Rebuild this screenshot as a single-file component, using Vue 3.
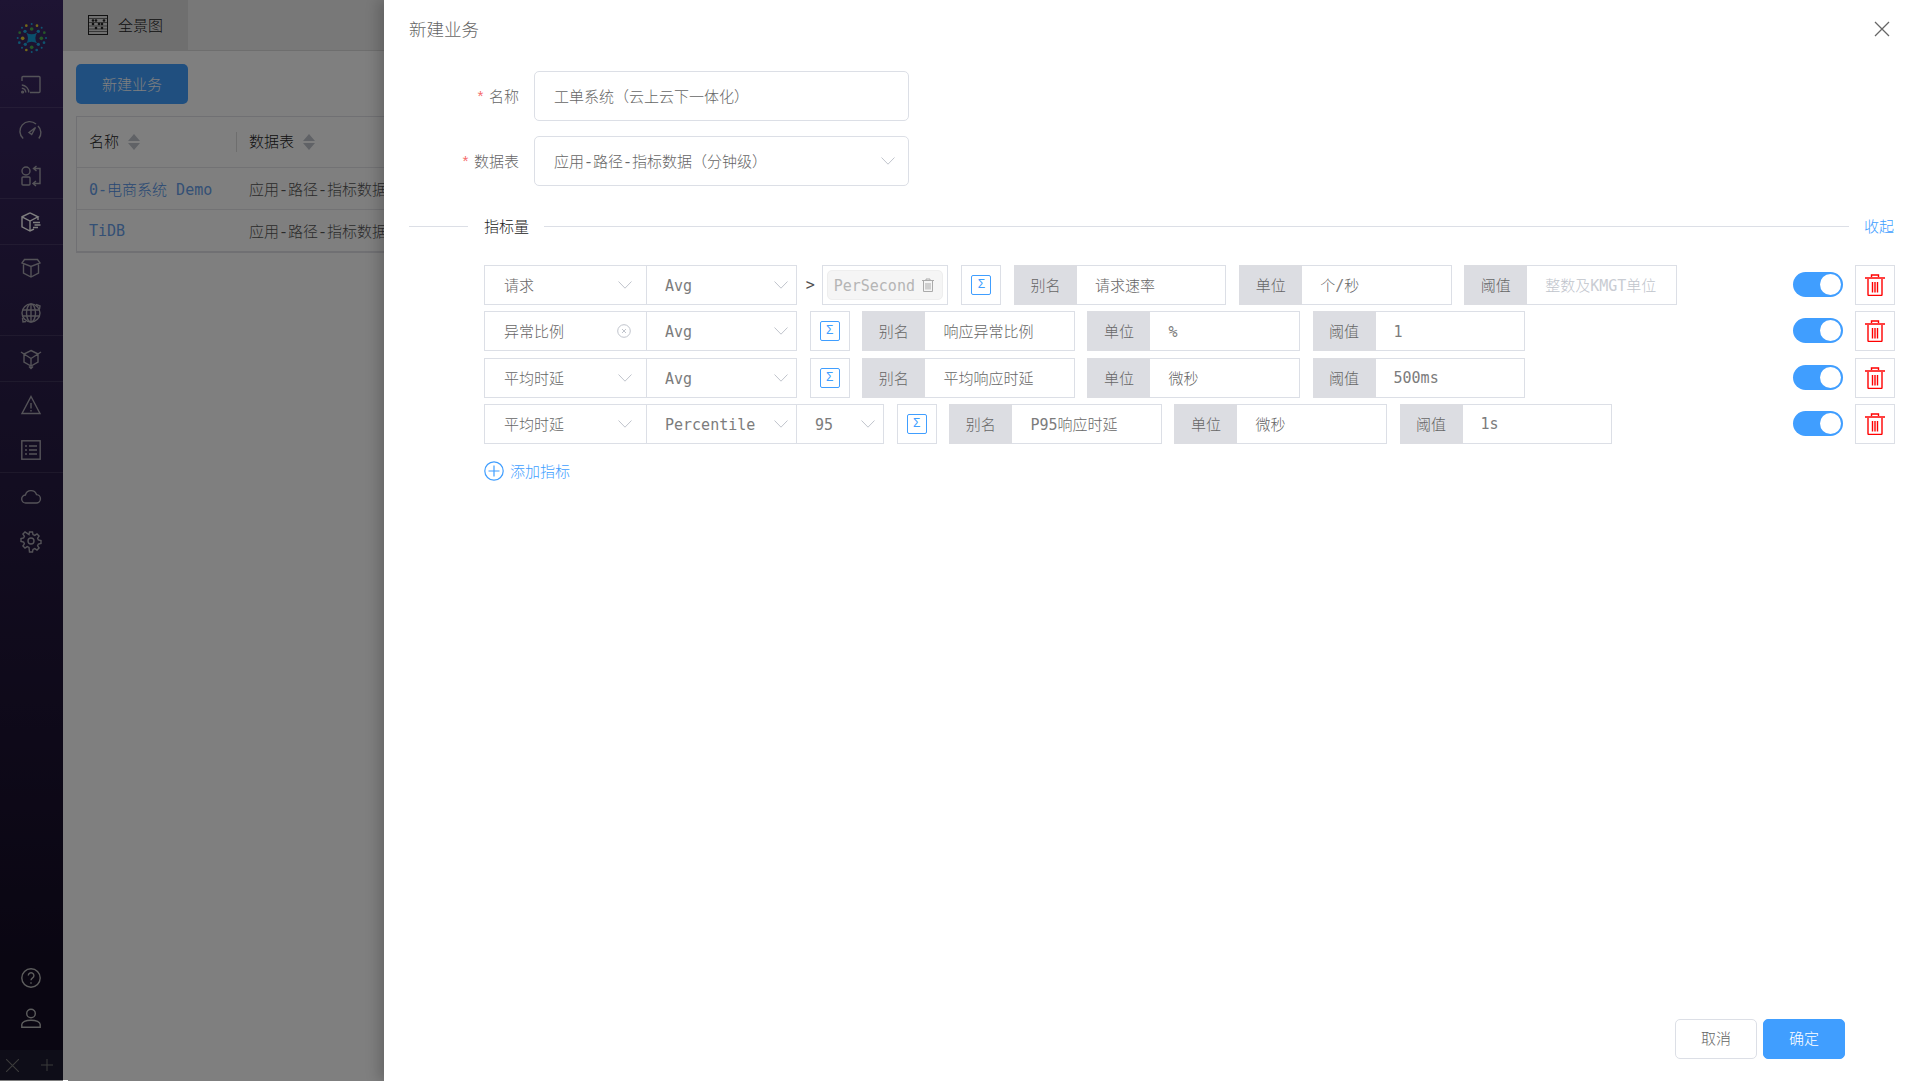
<script setup>
const logoDots = [
  [72,64,5,'#1fa8e0'],[112,64,5,'#1fa8e0'],[73,103,5,'#1fa8e0'],[112,103,5,'#1fa8e0'],
  [92,57,5.5,'#4cb050'],[92,112,5.5,'#4cb050'],[65,85,5.5,'#e8d030'],[121,85,5.5,'#4cb050'],
  [76,47,4,'#e8d030'],[108,47,4,'#e8d030'],[56,68,4,'#4cb050'],[130,68,4,'#4cb050'],
  [55,98,4,'#1fa8e0'],[129,98,4,'#1fa8e0'],[76,120,4,'#e8d030'],[107,120,4,'#1fa8e0'],
  [92,42,3,'#1fa8e0'],[92,126,3,'#1fa8e0'],[50,84,3,'#1fa8e0'],[135,84,3,'#1fa8e0'],
  [63,53,3,'#1fa8e0'],[122,53,3,'#1fa8e0'],[63,113,3,'#1fa8e0'],[122,113,3,'#1fa8e0']
]
const tableRows = [
  { name: '0-电商系统 Demo', table: '应用-路径-指标数据（分钟级）' },
  { name: 'TiDB', table: '应用-路径-指标数据（分钟级）' }
]
const metrics = [
  { metric: '请求', fn: 'Avg', tag: 'PerSecond', alias: '请求速率', unit: '个/秒', value: '', placeholder: '整数及KMGT单位' },
  { metric: '异常比例', clear: true, fn: 'Avg', alias: '响应异常比例', unit: '%', value: '1' },
  { metric: '平均时延', fn: 'Avg', alias: '平均响应时延', unit: '微秒', value: '500ms' },
  { metric: '平均时延', fn: 'Percentile', pct: '95', alias: 'P95响应时延', unit: '微秒', value: '1s' }
]
// Splits a string into Latin and CJK runs so Latin can take the mono face.
const runs = (s) => s.match(/[\x20-\x7e]+|[^\x20-\x7e]+/g) || []
const isLatin = (r) => /^[\x20-\x7e]/.test(r)
const allLatin = (r) => /^[\x20-\x7e]+$/.test(r)
</script>

<template>
  <div class="page">
    <aside class="sidebar">
      <div class="logo">
        <svg width="46" height="46" viewBox="24 15 138 138">
          <circle v-for="(d, i) in logoDots" :key="i" :cx="d[0]" :cy="d[1]" :r="d[2]" :fill="d[3]" />
          <path d="M76 68 Q92 78 108 68 Q98 84 108 100 Q92 90 76 100 Q86 84 76 68Z" fill="#149fd8" />
        </svg>
      </div>
      <div class="nav-group">
        <div class="nav-item">
          <svg viewBox="0 0 20 20"><path d="M1 6V2.500a1 1 0 0 1 1-1h16a1 1 0 0 1 1 1v14a1 1 0 0 1-1 1H9" /><path d="M.8 10a7.500 7.500 0 0 1 7 7.500M.8 13.200a4.500 4.500 0 0 1 4 4.300" /><circle cx="1.600" cy="17" r=".9" /></svg>
        </div>
      </div>
      <div class="nav-group">
        <div class="nav-item">
          <svg viewBox="0 0 20 20"><path d="M2.200 17.500A9.200 9.200 0 0 1 15 3M17 5a9.200 9.200 0 0 1 .8 12.500" /><path d="M8 11.500l6.500-5-3.800 7z" /></svg>
        </div>
        <div class="nav-item">
          <svg viewBox="0 0 20 20"><circle cx="5" cy="5" r="4" /><rect x="1" y="11" width="8" height="8" rx="1" /><path d="M12.500 2.500H19V12M15.500 0l-3 2.500 3 2.500M19 12v5.500h-7M15 15l-3 2.500 3 2.500" /></svg>
        </div>
      </div>
      <div class="nav-group">
        <div class="nav-item active">
          <svg viewBox="0 0 20 20"><path d="M9 .8 1 4.800v10l8 4.200 4-2M1 4.800l8 4.200 8-4.200-8-4M9 9v10M17 4.800V8" /><path d="M12 10.500h7M13.500 13h6M12 15.500h5" /></svg>
        </div>
      </div>
      <div class="nav-group">
        <div class="nav-item">
          <svg viewBox="0 0 20 20"><path d="M3.500 1.500h13L19 5l-9 3.500L1 5zM2.500 6.500V15l7.500 4 7.500-4V6.500M10 8.500V19" /></svg>
        </div>
        <div class="nav-item">
          <svg viewBox="0 0 20 20"><circle cx="10" cy="10" r="9" /><ellipse cx="10" cy="10" rx="4.500" ry="9" /><path d="M1.500 7h17M1.500 13h17M10 1v18" /><path d="M15 1.500l4 1.500-.5 3M1.500 15l.5 4 3-.5" /></svg>
        </div>
      </div>
      <div class="nav-group">
        <div class="nav-item">
          <svg viewBox="0 0 20 20"><path d="M10 1.500 17 5v8l-7 4-7-4V5zM3 5l7 4.500L17 5M10 9.500V20M0 3l3 2M20 3l-3 2M8 17.500l2 2 2-2" /></svg>
        </div>
      </div>
      <div class="nav-group">
        <div class="nav-item">
          <svg viewBox="0 0 20 20"><path d="M10 1.500 19 18.500H1z" /><path d="M10 8v5.500M10 15v1.500" /></svg>
        </div>
        <div class="nav-item">
          <svg viewBox="0 0 20 20"><rect x=".8" y=".8" width="18.400" height="18.400" /><path d="M4 6h2M8 6h8M4 10h2M8 10h8M4 14h2M8 14h8" /></svg>
        </div>
      </div>
      <div class="nav-group">
        <div class="nav-item">
          <svg viewBox="0 0 20 20"><path d="M5 17a4 4 0 0 1-.6-8A5.800 5.800 0 0 1 15.500 8.600 4.200 4.200 0 0 1 15 17z" /></svg>
        </div>
        <div class="nav-item">
          <svg viewBox="0 0 20 20"><circle cx="10" cy="10" r="3" /><path d="M8.500 1h3l.5 2.600 1.800.8 2.200-1.500 2.100 2.100-1.500 2.200.8 1.800 2.600.5v3l-2.600.5-.8 1.800 1.500 2.200-2.100 2.100-2.200-1.500-1.800.8-.5 2.600h-3L8 16.400l-1.800-.8L4 17.100 1.900 15l1.500-2.200-.8-1.800L0 10.500v-3l2.600-.5.8-1.800L1.900 3 4 .9l2.200 1.500L8 3.600z" /></svg>
        </div>
      </div>
      <div class="nav-bottom">
        <div class="nav-item small">
          <svg viewBox="0 0 20 20"><circle cx="10" cy="10" r="9.200" /><path d="M7.300 7.500a2.800 2.800 0 1 1 4.300 2.400c-1 .7-1.600 1.200-1.600 2.400M10 14.200v1.600" /></svg>
        </div>
        <div class="nav-item small">
          <svg viewBox="0 0 20 20"><circle cx="10" cy="5.500" r="4.300" /><path d="M.8 19.200v-2.700c0-2.500 4-4.300 9.200-4.300s9.200 1.800 9.200 4.300v2.700z" /></svg>
        </div>
      </div>
      <div class="nav-strip">
        <svg class="strip-x" viewBox="0 0 12 12"><path d="M0 0 12 12M12 0 0 12" /></svg>
        <svg class="strip-plus" viewBox="0 0 12 12"><path d="M6 0V12M0 6H12" /></svg>
      </div>
    </aside>

    <main class="main">
      <div class="tabs">
        <div class="tab">
          <svg class="tab-icon" viewBox="0 0 20 20"><rect x=".5" y=".5" width="19" height="19" /><path d="M1 3.500h18M1 16.500h18M1 7.500h18M1 11h18M1 14h18" stroke-width=".6" /><circle cx="5" cy="5.500" r="1.300" /><circle cx="8" cy="5.500" r="1.300" /><circle cx="11" cy="9" r="1.300" /><circle cx="14" cy="9" r="1.300" /><circle cx="5" cy="9" r="1.300" /><circle cx="8" cy="13" r="1.300" /><circle cx="14" cy="13" r="1.300" /><circle cx="16" cy="5.500" r="1.300" /></svg>
          <span>全景图</span>
        </div>
      </div>
      <div class="content">
        <button class="create-btn">新建业务</button>
        <div class="table">
          <div class="thead">
            <div class="col-name th">
              <span>名称</span>
              <span class="sorter"><i class="up"></i><i class="down"></i></span>
            </div>
            <div class="col-table th">
              <span>数据表</span>
              <span class="sorter"><i class="up"></i><i class="down"></i></span>
            </div>
          </div>
          <div v-for="r in tableRows" :key="r.name" class="tr">
            <div class="col-name link" :class="{ solo: allLatin(r.name) }">
              <span v-for="(p, k) in runs(r.name)" :key="k" :class="{ latin: isLatin(p) }">{{ p }}</span>
            </div>
            <div class="col-table">{{ r.table }}</div>
          </div>
        </div>
      </div>
    </main>

    <div class="overlay"></div>
    <div class="sliver"></div>

    <section class="drawer">
      <header class="drawer-head">
        <span class="drawer-title">新建业务</span>
        <svg class="close" viewBox="0 0 16 16"><path d="M1 1 15 15M15 1 1 15" /></svg>
      </header>

      <div class="form-row">
        <label class="form-label"><em>*</em>名称</label>
        <div class="form-control">工单系统（云上云下一体化）</div>
      </div>
      <div class="form-row">
        <label class="form-label"><em>*</em>数据表</label>
        <div class="form-control">
          <span>应用-路径-指标数据（分钟级）</span>
          <svg class="chev big" viewBox="0 0 14 8"><path d="M.5.5 7 7.200 13.500.5" /></svg>
        </div>
      </div>

      <div class="section">
        <span class="line short"></span>
        <span class="section-title">指标量</span>
        <span class="line"></span>
        <a class="collapse">收起</a>
      </div>

      <div class="metrics">
        <div v-for="(m, i) in metrics" :key="i" class="metric-row">
          <div class="selects">
            <div class="sel sel-metric">
              <span>{{ m.metric }}</span>
              <svg v-if="m.clear" class="clear" viewBox="0 0 14 14"><circle cx="7" cy="7" r="6.300" /><path d="M5 5l4 4M9 5l-4 4" /></svg>
              <svg v-else class="chev" viewBox="0 0 14 8"><path d="M.5.5 7 7.200 13.500.5" /></svg>
            </div>
            <div class="sel sel-fn">
              <span class="latin solo">{{ m.fn }}</span>
              <svg class="chev" viewBox="0 0 14 8"><path d="M.5.5 7 7.200 13.500.5" /></svg>
            </div>
            <div v-if="m.pct" class="sel sel-pct">
              <span class="latin solo">{{ m.pct }}</span>
              <svg class="chev" viewBox="0 0 14 8"><path d="M.5.5 7 7.200 13.500.5" /></svg>
            </div>
          </div>
          <template v-if="m.tag">
            <span class="gt latin">&gt;</span>
            <div class="tag-box">
              <div class="tag">
                <span class="latin solo">{{ m.tag }}</span>
                <svg viewBox="0 0 12 14"><path d="M0 2.500h12M4 2.500V1h4v1.500M1.500 2.500V13.500h9V2.500M4 5v6.500M6 5v6.500M8 5v6.500" /></svg>
              </div>
            </div>
          </template>
          <div class="sigma-box"><span class="sigma">Σ</span></div>
          <div class="addon">
            <span class="addon-label">别名</span>
            <span class="addon-value"><span v-for="(p, k) in runs(m.alias)" :key="k" :class="{ latin: isLatin(p) }">{{ p }}</span></span>
          </div>
          <div class="addon">
            <span class="addon-label">单位</span>
            <span class="addon-value" :class="{ solo: allLatin(m.unit) }"><span v-for="(p, k) in runs(m.unit)" :key="k" :class="{ latin: isLatin(p) }">{{ p }}</span></span>
          </div>
          <div class="addon">
            <span class="addon-label">阈值</span>
            <span class="addon-value" :class="{ placeholder: !m.value, solo: m.value && allLatin(m.value) }"><span v-for="(p, k) in runs(m.value || m.placeholder)" :key="k" :class="{ latin: isLatin(p) }">{{ p }}</span></span>
          </div>
          <div class="switch"><span class="knob"></span></div>
          <div class="del-box">
            <svg viewBox="0 0 20 22"><path d="M0 4h20M6.500 3V1h7v2" /><path d="M3 5v15.500a1 1 0 0 0 1 1h12a1 1 0 0 0 1-1V5M7.500 8v10.500M10 8v10.500M12.500 8v10.500" /></svg>
          </div>
        </div>
      </div>

      <a class="add-metric">
        <svg viewBox="0 0 20 20"><circle cx="10" cy="10" r="9.200" /><path d="M10 4.500v11M4.500 10h11" /></svg>
        <span>添加指标</span>
      </a>

      <footer class="drawer-foot">
        <button class="btn">取消</button>
        <button class="btn primary">确定</button>
      </footer>
    </section>
  </div>
</template>

<style scoped>
.page {
  position: relative;
  display: flex;
  width: 1920px;
  height: 1081px;
  overflow: hidden;
  background: #fff;
  font-family: "Liberation Mono", "Noto Sans CJK SC", monospace;
  font-size: 15px;
  font-weight: 300;
  color: #666;
}
.latin {
  font-family: "DejaVu Sans Mono", monospace;
  opacity: .85;
}
.solo {
  padding-top: 2px;
}
.sidebar {
  width: 63px;
  height: 1080px;
  flex: none;
  display: flex;
  flex-direction: column;
  background: linear-gradient(#3c2866, #2c1f4c 30%, #140c24 90%);
}
.logo {
  height: 62px;
  box-sizing: border-box;
  padding-top: 15px;
  display: flex;
  justify-content: center;
}
.nav-group {
  border-bottom: 1px solid rgba(255, 255, 255, .1);
}
.nav-group:nth-child(8) {
  border-bottom: 0;
}
.nav-item {
  height: 45px;
  padding-right: 1px;
  display: flex;
  align-items: center;
  justify-content: center;
}
.nav-item svg {
  width: 20px;
  height: 20px;
  fill: none;
  stroke: #a9a6b0;
  stroke-width: 1.4;
  overflow: visible;
}
.nav-item.active svg {
  stroke: #fff;
}
.nav-bottom {
  margin-top: auto;
  padding-bottom: 12px;
}
.nav-item.small {
  height: 40px;
}
.nav-item.small svg {
  stroke: #bbb;
}
.nav-strip {
  height: 30px;
  flex: none;
  background: #1c1a30;
  display: flex;
  align-items: center;
  justify-content: space-between;
  padding: 0 10px 0 6px;
}
.nav-strip svg {
  fill: none;
  stroke: #777;
  stroke-width: 1;
}
.strip-x { width: 13px; height: 13px; }
.strip-plus { width: 12px; height: 12px; }

.main {
  flex: 1;
  min-width: 0;
}
.tabs {
  height: 50px;
  background: #f0f0f0;
  border-bottom: 1px solid #ddd;
}
.tab {
  width: 125px;
  height: 50px;
  box-sizing: border-box;
  background: #dedede;
  padding-left: 25px;
  display: flex;
  align-items: center;
  gap: 10px;
  color: #222;
}
.tab span {
  margin-top: -1px;
}
.tab-icon {
  width: 20px;
  height: 20px;
  fill: none;
  stroke: #222;
  stroke-width: 1;
  margin-top: -1px;
}
.tab-icon circle {
  fill: #222;
  stroke: none;
}
.content {
  padding: 13px 13px;
}
.create-btn {
  display: block;
  width: 112px;
  height: 40px;
  border: 0;
  border-radius: 5px;
  background: #409eff;
  color: #fff;
  font: inherit;
  padding: 0;
}
.table {
  margin-top: 12px;
  border: 1px solid #e0e0e6;
  border-bottom-width: 2px;
}
.thead {
  display: flex;
  height: 50px;
  align-items: center;
  border-bottom: 1px solid #e4e4e8;
  color: #222;
}
.tr {
  display: flex;
  height: 41px;
  align-items: center;
  border-bottom: 1px solid #e4e4e8;
  color: #555;
}
.tr:last-child {
  border-bottom: 0;
}
.col-name {
  width: 160px;
  padding-left: 12px;
  box-sizing: border-box;
  flex: none;
}
.col-table {
  padding-left: 12px;
  white-space: nowrap;
}
.th {
  display: flex;
  align-items: center;
  gap: 9px;
}
.th span:first-child {
  margin-top: -2px;
}
.thead .col-name {
  border-right: 1px solid #ddd;
  height: 20px;
}
.link {
  color: #4d90e8;
}
.sorter {
  display: flex;
  flex-direction: column;
  gap: 2px;
}
.sorter i {
  display: block;
  width: 0;
  height: 0;
  border-left: 6px solid transparent;
  border-right: 6px solid transparent;
}
.sorter .up { border-bottom: 7px solid #c0c4cc; }
.sorter .down { border-top: 7px solid #c0c4cc; }

.overlay {
  position: absolute;
  inset: 0;
  background: rgba(0, 0, 0, .5);
}
.sliver {
  position: absolute;
  left: 63px;
  bottom: 0;
  width: 5px;
  height: 1px;
  background: #fff;
}
.drawer {
  position: absolute;
  top: 0;
  right: 0;
  bottom: 0;
  width: 1536px;
  box-sizing: border-box;
  padding: 0 25px 22px 25px;
  background: #fff;
  box-shadow: -6px 0 12px rgba(0, 0, 0, .18);
  display: flex;
  flex-direction: column;
}
.drawer-head {
  height: 57px;
  flex: none;
  margin-bottom: 14px;
  display: flex;
  align-items: center;
  justify-content: space-between;
}
.drawer-title {
  font-size: 17.500px;
  color: #666;
}
.close {
  width: 16px;
  height: 16px;
  margin-right: 5px;
  fill: none;
  stroke: #666;
  stroke-width: 1.300;
}
.form-row {
  display: flex;
  align-items: center;
  gap: 15px;
  margin-bottom: 15px;
}
.form-label {
  width: 110px;
  text-align: right;
  color: #666;
}
.form-label em {
  color: #f56c6c;
  font-style: normal;
  margin-right: 4px;
}
.form-control {
  position: relative;
  width: 375px;
  height: 50px;
  box-sizing: border-box;
  border: 1px solid #dcdfe6;
  border-radius: 5px;
  padding: 0 13px 0 19px;
  display: flex;
  align-items: center;
  justify-content: space-between;
  color: #666;
}
.section {
  display: flex;
  align-items: center;
  margin-top: 15px;
  height: 20px;
}
.line {
  flex: 1;
  height: 1px;
  background: #dcdfe6;
  margin: 0 15px 0 15px;
}
.line.short {
  flex: none;
  width: 59px;
  margin: 0 16px 0 0;
}
.section-title {
  color: #222;
}
.collapse {
  color: #409eff;
  margin-right: 1px;
}
.metrics {
  margin-top: 29px;
  padding-left: 75px;
  display: flex;
  flex-direction: column;
  gap: 6.250px;
}
.metric-row {
  position: relative;
  height: 40px;
  display: flex;
  align-items: stretch;
  gap: 12.700px;
}
.selects {
  display: flex;
}
.sel {
  position: relative;
  box-sizing: border-box;
  border: 1px solid #dcdfe6;
  display: flex;
  align-items: center;
  margin-left: -1px;
  padding-left: 18px;
}
.sel-metric { width: 163px; margin-left: 0; padding-left: 19px; }
.sel-fn { width: 151px; }
.sel-pct { width: 88px; padding-left: 18px; }
.chev {
  position: absolute;
  right: 8px;
  top: 50%;
  width: 14px;
  height: 8px;
  margin-top: -4px;
  fill: none;
  stroke: #c0c4cc;
  stroke-width: 1;
}
.sel-metric .chev {
  right: 14px;
}
.chev.big {
  position: static;
  margin: 0;
  flex: none;
}
.clear {
  position: absolute;
  right: 15px;
  top: 50%;
  width: 14px;
  height: 14px;
  margin-top: -7px;
  fill: none;
  stroke: #c0c4cc;
  stroke-width: 1;
}
.gt {
  display: flex;
  align-items: center;
  width: 14px;
  margin: 0 -10.700px 0 -4px;
  color: #333;
}
.tag-box {
  width: 126px;
  margin-right: 1px;
  box-sizing: border-box;
  border: 1px solid #dcdfe6;
  padding: 4px;
  display: flex;
}
.tag {
  flex: 1;
  box-sizing: border-box;
  background: #f5f5f5;
  border: 1px solid #eee;
  border-radius: 5px;
  padding-left: 6px;
  display: flex;
  align-items: center;
  gap: 6px;
  color: #aaa;
}
.tag svg {
  width: 12px;
  height: 14px;
  margin-left: 1px;
  fill: none;
  stroke: #aaa;
  stroke-width: 1;
}
.sigma-box {
  width: 40px;
  box-sizing: border-box;
  border: 1px solid #dcdfe6;
  display: flex;
  align-items: center;
  justify-content: center;
}
.sigma {
  width: 20px;
  height: 20px;
  box-sizing: border-box;
  border: 1px solid #409eff;
  border-radius: 2px;
  color: #409eff;
  font-size: 12px;
  line-height: 18px;
  text-align: center;
}
.addon {
  width: 212.400px;
  box-sizing: border-box;
  border: 1px solid #dcdfe6;
  display: flex;
  align-items: center;
}
.addon-label {
  width: 63px;
  margin-left: -1px;
  height: calc(100% + 2px);
  flex: none;
  background: #dcdde2;
  display: flex;
  align-items: center;
  justify-content: center;
  color: #666;
}
.addon-value {
  padding-left: 18px;
  white-space: nowrap;
}
.placeholder {
  color: #c0c4cc;
}
.switch {
  position: absolute;
  right: 52px;
  top: 7px;
  width: 50px;
  height: 25px;
  border-radius: 13px;
  background: #409eff;
}
.knob {
  position: absolute;
  right: 2px;
  top: 2px;
  width: 21px;
  height: 21px;
  border-radius: 50%;
  background: #fff;
}
.del-box {
  position: absolute;
  right: 0;
  top: 0;
  width: 40px;
  height: 40px;
  box-sizing: border-box;
  border: 1px solid #dcdfe6;
  display: flex;
  align-items: center;
  justify-content: center;
}
.del-box svg {
  width: 20px;
  height: 22px;
  fill: none;
  stroke: #f00;
  stroke-width: 1.400;
}
.add-metric {
  margin: 17px 0 0 75px;
  display: flex;
  align-items: center;
  gap: 6px;
  color: #409eff;
  height: 20px;
}
.add-metric svg {
  width: 20px;
  height: 20px;
  fill: none;
  stroke: #409eff;
  stroke-width: 1.200;
}
.drawer-foot {
  margin-top: auto;
  padding-right: 50px;
  display: flex;
  justify-content: flex-end;
  gap: 6px;
}
.btn {
  width: 82px;
  height: 40px;
  box-sizing: border-box;
  border: 1px solid #dcdfe6;
  border-radius: 5px;
  background: #fff;
  color: #666;
  font: inherit;
  padding: 0 0 2px;
}
.btn.primary {
  background: #409eff;
  border-color: #409eff;
  color: #fff;
}
</style>

<style>
html, body {
  margin: 0;
  background: #fff;
}
</style>
